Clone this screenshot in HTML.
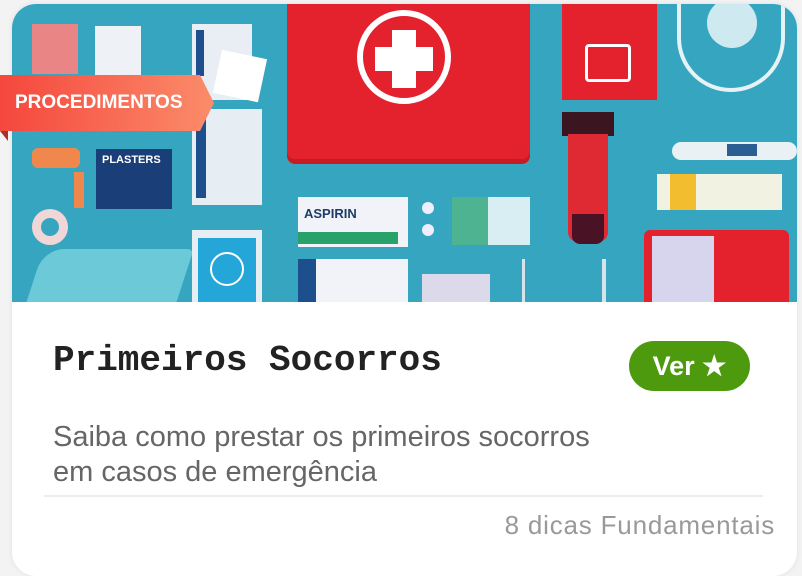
<!DOCTYPE html>
<html><head><meta charset="utf-8"><style>
*{margin:0;padding:0;box-sizing:border-box}
body{width:802px;height:576px;background:#f3f3f3;position:relative;overflow:hidden;font-family:"Liberation Sans",sans-serif}
.card{position:absolute;left:12px;top:4px;width:785px;height:572px;background:#fff;border-radius:24px;overflow:hidden;box-shadow:0 0 6px rgba(0,0,0,.08)}
.img{position:absolute;left:0;top:0;width:785px;height:298px;background:#36a6c0;overflow:hidden}
.a{position:absolute}
.badge{position:absolute;left:0;top:75px;width:214px;height:56px;background:linear-gradient(90deg,#f5473d,#fb8c6a);clip-path:polygon(0 0,200px 0,214px 28px,200px 56px,0 56px);color:#fff;font-weight:bold;font-size:19px;line-height:56px;padding-left:15px}
.fold{position:absolute;left:0;top:131px;width:0;height:0;border-top:10px solid #a83228;border-left:8px solid transparent}
</style></head><body>
<div class="card">
 <div class="img">
  <div class="a" style="left:20px;top:20px;width:46px;height:50px;background:#e98585"></div>
  <div class="a" style="left:83px;top:22px;width:46px;height:50px;background:#eef2f6"></div>
  <div class="a" style="left:180px;top:20px;width:60px;height:76px;background:#e9eef4"></div>
  <div class="a" style="left:184px;top:26px;width:8px;height:46px;background:#1e4e8c"></div>
  <div class="a" style="left:205px;top:50px;width:46px;height:44px;background:#fff;transform:rotate(12deg)"></div>
  <div class="a" style="left:275px;top:-10px;width:243px;height:165px;background:#e4222d;border-radius:8px;box-shadow:0 5px 0 #c81c25"></div>
  <div class="a" style="left:345px;top:6px;width:94px;height:94px;border-radius:50%;border:6px solid #fff"></div>
  <div class="a" style="left:380px;top:26px;width:24px;height:58px;background:#fff"></div>
  <div class="a" style="left:363px;top:43px;width:58px;height:24px;background:#fff"></div>
  <div class="a" style="left:550px;top:-4px;width:95px;height:100px;background:#e4222d"></div>
  <div class="a" style="left:573px;top:40px;width:46px;height:38px;border:3px solid #fff;border-radius:4px"></div>
  <div class="a" style="left:665px;top:-10px;width:108px;height:98px;border:4px solid #e5f2f6;border-radius:0 0 54px 54px"></div>
  <div class="a" style="left:695px;top:-6px;width:50px;height:50px;border-radius:50%;background:#cfe9f1"></div>
  <div class="a" style="left:550px;top:108px;width:52px;height:24px;background:#3b1620"></div>
  <div class="a" style="left:556px;top:130px;width:40px;height:108px;background:#e02a33;border-radius:0 0 10px 10px"></div>
  <div class="a" style="left:560px;top:210px;width:32px;height:30px;background:#4a1225;border-radius:0 0 8px 8px"></div>
  <div class="a" style="left:660px;top:138px;width:125px;height:18px;background:#e9f1f5;border-radius:9px"></div>
  <div class="a" style="left:715px;top:140px;width:30px;height:12px;background:#2b5f94"></div>
  <div class="a" style="left:645px;top:170px;width:125px;height:36px;background:#f2f2e2"></div>
  <div class="a" style="left:658px;top:170px;width:26px;height:36px;background:#f2bd2e"></div>
  <div class="a" style="left:632px;top:226px;width:145px;height:80px;background:#e4222d;border-radius:6px"></div>
  <div class="a" style="left:640px;top:232px;width:62px;height:70px;background:#d7d4ee"></div>
  <div class="a" style="left:286px;top:193px;width:110px;height:50px;background:#f1f3f8"></div>
  <div class="a" style="left:286px;top:228px;width:100px;height:12px;background:#28a26a"></div>
  <div class="a" style="left:292px;top:202px;font:bold 13px 'Liberation Sans',sans-serif;color:#1d3c6a">ASPIRIN</div>
  <div class="a" style="left:410px;top:198px;width:12px;height:12px;border-radius:50%;background:#eef"></div>
  <div class="a" style="left:410px;top:220px;width:12px;height:12px;border-radius:50%;background:#eef"></div>
  <div class="a" style="left:440px;top:193px;width:78px;height:48px;background:#d8eef2"></div>
  <div class="a" style="left:440px;top:193px;width:36px;height:48px;background:#2ca478;opacity:.8"></div>
  <div class="a" style="left:286px;top:255px;width:110px;height:50px;background:#f1f3f8"></div>
  <div class="a" style="left:286px;top:255px;width:18px;height:50px;background:#1d4f8c"></div>
  <div class="a" style="left:410px;top:270px;width:68px;height:40px;background:#dcdaea"></div>
  <div class="a" style="left:180px;top:105px;width:70px;height:96px;background:#e6eef4"></div>
  <div class="a" style="left:184px;top:110px;width:10px;height:84px;background:#1d4f8c"></div>
  <div class="a" style="left:84px;top:145px;width:76px;height:60px;background:#1a3f78"></div>
  <div class="a" style="left:90px;top:150px;font:bold 11px 'Liberation Sans',sans-serif;color:#fff">PLASTERS</div>
  <div class="a" style="left:20px;top:144px;width:48px;height:20px;background:#f0884e;border-radius:6px"></div>
  <div class="a" style="left:62px;top:168px;width:10px;height:36px;background:#f0884e"></div>
  <div class="a" style="left:20px;top:205px;width:36px;height:36px;border-radius:50%;border:9px solid #f0d6d6"></div>
  <div class="a" style="left:22px;top:245px;width:150px;height:60px;background:#6cc9d8;border-radius:20px 6px 0 0;transform:skewX(-18deg)"></div>
  <div class="a" style="left:180px;top:226px;width:70px;height:80px;background:#e6eef4"></div>
  <div class="a" style="left:186px;top:234px;width:58px;height:66px;background:#25a6d8"></div>
  <div class="a" style="left:198px;top:248px;width:34px;height:34px;border-radius:50%;border:2px solid #fff"></div>
  <div class="a" style="left:510px;top:255px;width:3px;height:48px;background:#d8e2ea"></div>
  <div class="a" style="left:590px;top:255px;width:4px;height:48px;background:#d8e2ea"></div>
 </div>
 <div class="a" style="left:41px;top:336px;font:bold 36px 'Liberation Mono',monospace;color:#222">Primeiros Socorros</div>
 <div class="a" style="left:617px;top:337px;width:121px;height:50px;border-radius:25px;background:#4e9a0e;color:#fff;font:bold 27px 'Liberation Sans',sans-serif;line-height:50px;text-align:center">Ver ★</div>
 <div class="a" style="left:41px;top:416px;font-size:29px;line-height:35px;color:#666;white-space:nowrap">Saiba como prestar os primeiros socorros<br>em casos de emergência</div>
 <div class="a" style="left:32px;top:491px;width:719px;height:2px;background:#ececec"></div>
 <div class="a" style="right:22px;top:506px;font-size:26px;letter-spacing:0.8px;color:#999;white-space:nowrap">8 dicas Fundamentais</div>
</div>
<div class="badge">PROCEDIMENTOS</div>
<div class="fold"></div>
</body></html>
